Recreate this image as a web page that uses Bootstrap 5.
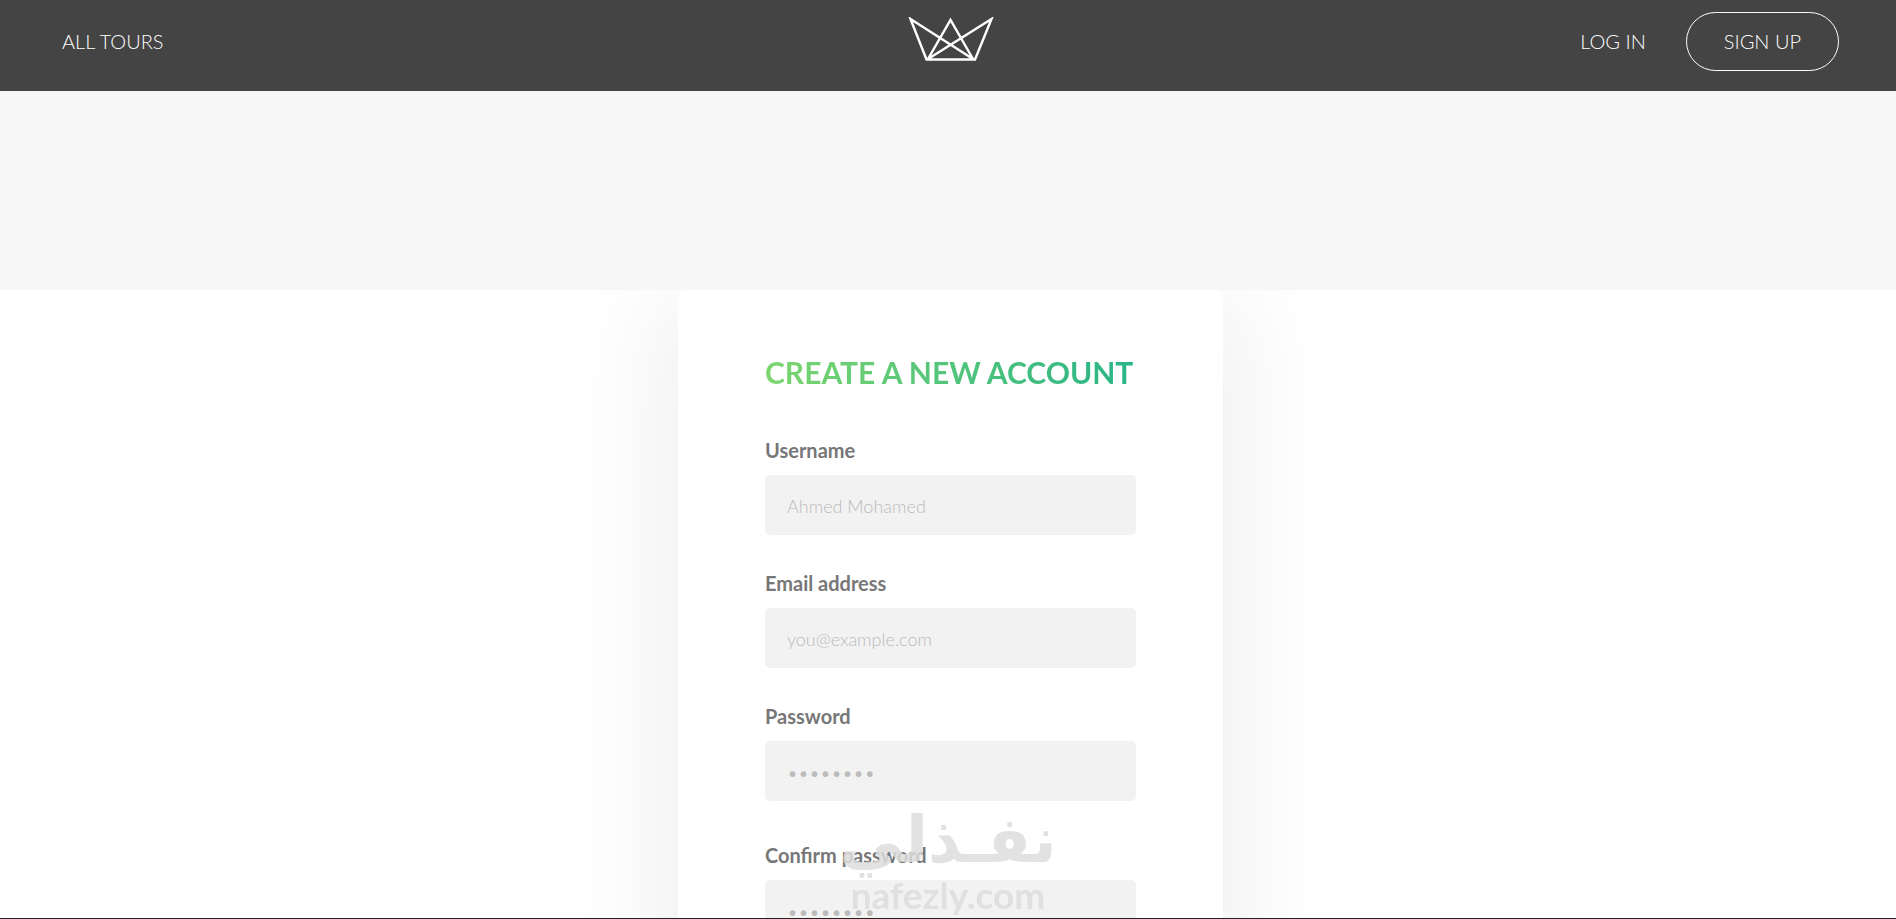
<!DOCTYPE html>
<html lang="en">
<head>
<meta charset="utf-8">
<meta name="viewport" content="width=device-width, initial-scale=1">
<title>Create a new account</title>
<link href="https://cdn.jsdelivr.net/npm/bootstrap@5.3.0/dist/css/bootstrap.min.css" rel="stylesheet">
<style>
  body { font-family: Lato, "Liberation Sans", sans-serif; font-weight: 300; color: #777; background: #f7f7f7; border-bottom: 1px solid #222; }
  .site-header { background: #444; height: 91px; padding: 0 57px 8px 62px; }
  .site-header a { color: #fff; font-size: 20px; line-height: 29px; text-decoration: none; text-transform: uppercase; }
  .site-header .signup { border: 1px solid #fff; border-radius: 30px; padding: 14px 37px; }
  .side { flex: 1 1 0; }
  .crown { padding-bottom: 4px; }
  .page { margin-top: 199px; padding-left: 5px; scrollbar-width: none; }
  .signup-card { width: 545px; max-width: 100%; padding: 60px 87px; border-radius: 6px; box-shadow: 0 30px 100px 25px rgba(0,0,0,.06); }
  .form-title { font-size: 30px; line-height: 44px; font-weight: 700; margin-bottom: 40px; white-space: nowrap; background: linear-gradient(to right, #7dd56f, #28b487); -webkit-background-clip: text; background-clip: text; color: transparent; }
  .field { margin-bottom: 32px; }
  .field.spaced { margin-bottom: 38px; }
  .field label { display: block; font-size: 20px; line-height: 32px; font-weight: 700; margin-bottom: 9px; }
  .field .form-control { height: 60px; border: 0; border-radius: 5px; background: #f2f2f2; padding: 2px 22px 0; font-size: 18px; font-weight: 300; color: #777; }
  .field .form-control::placeholder { color: #bbb; opacity: 1; }
  .field .form-control.secret { font-size: 19px; }
  .watermark { position: fixed; bottom: 5px; left: 50%; transform: translateX(-50%); color: #ddd; opacity: .85; pointer-events: none; text-align: center; }
  .wm-arabic { font: 700 64px/72px "DejaVu Sans", sans-serif; }
  .wm-latin { font: 700 37px/38px Lato, sans-serif; }
</style>
</head>
<body class="vh-100 d-flex flex-column overflow-hidden">
<header class="site-header d-flex align-items-center flex-shrink-0">
  <nav class="side"><a href="#">All tours</a></nav>
  <a href="#" aria-label="Home" class="crown d-flex">
    <svg width="86" height="46" viewBox="0 0 86 46" fill="none" stroke="#fff" stroke-width="2.4" aria-hidden="true">
      <path d="M2.500 2 18.500 42.500H67L83.500 2 20 42 42.500 3 65 42Z"/>
    </svg>
  </a>
  <nav class="side d-flex justify-content-end align-items-center">
    <a href="#" class="me-4">Log in</a>
    <a href="#" class="signup ms-3">Sign up</a>
  </nav>
</header>
<main class="page bg-white flex-grow-1 overflow-auto">
  <div class="signup-card bg-white mx-auto">
    <h1 class="form-title">CREATE A NEW ACCOUNT</h1>
    <form>
      <div class="field"><label for="name">Username</label><input id="name" type="text" class="form-control" placeholder="Ahmed Mohamed"></div>
      <div class="field"><label for="email">Email address</label><input id="email" type="email" class="form-control" placeholder="you@example.com"></div>
      <div class="field spaced"><label for="pass">Password</label><input id="pass" type="password" class="form-control secret" placeholder="••••••••"></div>
      <div class="field"><label for="confirm">Confirm password</label><input id="confirm" type="password" class="form-control secret" placeholder="••••••••"></div>
    </form>
  </div>
</main>
<div class="watermark" aria-hidden="true">
  <div class="wm-arabic" lang="ar" dir="rtl">نفـذلي</div>
  <div class="wm-latin">nafezly.com</div>
</div>
<script src="https://cdn.jsdelivr.net/npm/bootstrap@5.3.0/dist/js/bootstrap.bundle.min.js"></script>
</body>
</html>
